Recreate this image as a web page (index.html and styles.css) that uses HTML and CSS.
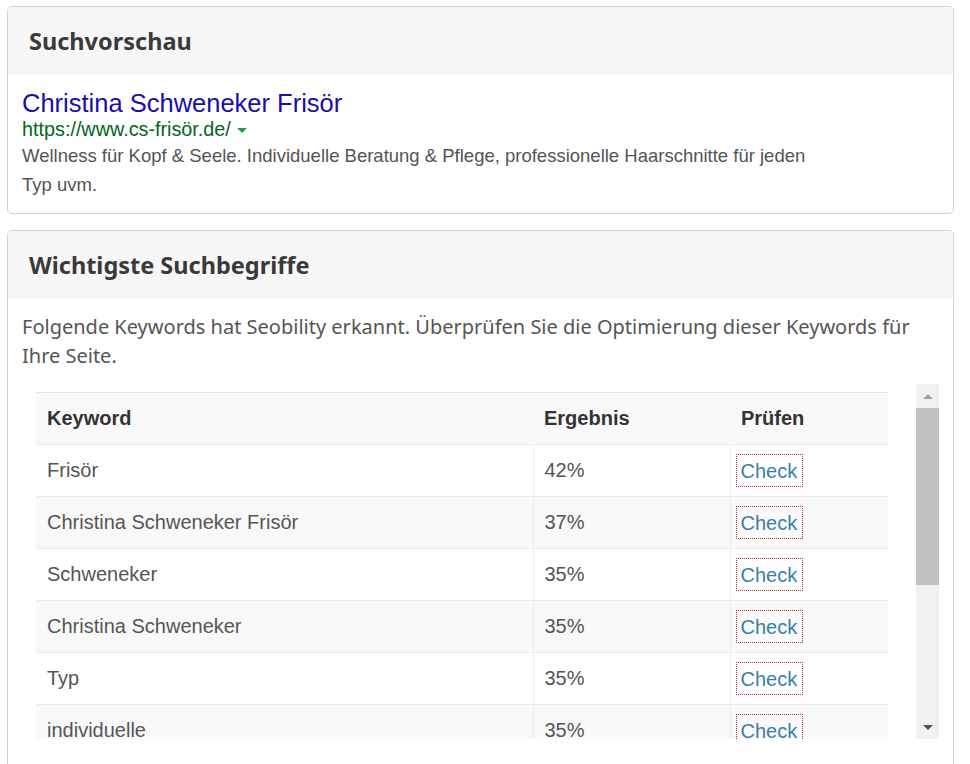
FILE: index.html
```html
<!DOCTYPE html>
<html lang="de">
<head>
<meta charset="utf-8">
<title>Suchvorschau</title>
<link rel="stylesheet" href="styles.css">
</head>
<body>
<div class="page">
  <section class="card">
    <header class="card-head">Suchvorschau</header>
    <div class="card-body snippet">
      <div class="s-title">Christina Schweneker Frisör</div>
      <div class="s-url">https://www.cs-frisör.de/<span class="caret"></span></div>
      <div class="s-desc">Wellness für Kopf &amp; Seele. Individuelle Beratung &amp; Pflege, professionelle Haarschnitte für jeden Typ uvm.</div>
    </div>
  </section>
  <section class="card card-keywords">
    <header class="card-head">Wichtigste Suchbegriffe</header>
    <div class="card-body">
      <p class="intro">Folgende Keywords hat Seobility erkannt. Überprüfen Sie die Optimierung dieser Keywords für Ihre Seite.</p>
      <div class="scrollbox">
        <div class="viewport">
          <table class="kw-table">
            <thead>
              <tr><th class="c1">Keyword</th><th class="c2">Ergebnis</th><th class="c3">Prüfen</th></tr>
            </thead>
            <tbody>
              <tr><td>Frisör</td><td>42%</td><td><a class="check" href="#">Check</a></td></tr>
              <tr><td>Christina Schweneker Frisör</td><td>37%</td><td><a class="check" href="#">Check</a></td></tr>
              <tr><td>Schweneker</td><td>35%</td><td><a class="check" href="#">Check</a></td></tr>
              <tr><td>Christina Schweneker</td><td>35%</td><td><a class="check" href="#">Check</a></td></tr>
              <tr><td>Typ</td><td>35%</td><td><a class="check" href="#">Check</a></td></tr>
              <tr><td>individuelle</td><td>35%</td><td><a class="check" href="#">Check</a></td></tr>
              <tr><td>Beratung</td><td>35%</td><td><a class="check" href="#">Check</a></td></tr>
            </tbody>
          </table>
        </div>
        <div class="scrollbar">
          <div class="sb-btn sb-up"><span class="tri-up"></span></div>
          <div class="sb-track"><div class="sb-thumb"></div></div>
          <div class="sb-btn sb-down"><span class="tri-down"></span></div>
        </div>
      </div>
    </div>
  </section>
</div>
</body>
</html>
```

FILE: styles.css
```css
html, body {
  margin: 0;
  padding: 0;
  background: #ffffff;
}

body {
  font-family: "Noto Sans", "Open Sans", sans-serif;
  color: #555555;
  overflow: hidden;
}

.page {
  padding: 6px 16px 0 7px;
  display: flex;
  flex-direction: column;
  gap: 16px;
}

.card {
  border: 1px solid #d2d2d2;
  border-radius: 5px;
  background: #ffffff;
  overflow: hidden;
}

.card-head {
  height: 68px;
  display: flex;
  align-items: center;
  padding: 0 21px;
  background: #f7f7f7;
  font-family: "Noto Sans", sans-serif;
  font-weight: 700;
  font-size: 23.5px;
  color: #3a3a3a;
}

.card-body {
  padding: 0 14px;
}

.snippet {
  padding-top: 15px;
  padding-bottom: 14px;
  font-family: "Liberation Sans", Arial, sans-serif;
}

.s-title {
  font-size: 25.5px;
  line-height: 27px;
  color: #1a0dab;
}

.s-url {
  font-size: 19.8px;
  line-height: 24px;
  color: #006621;
}

.caret {
  display: inline-block;
  width: 0;
  height: 0;
  margin-left: 6px;
  vertical-align: middle;
  border-left: 5px solid transparent;
  border-right: 5px solid transparent;
  border-top: 5px solid #2a9a4a;
}

.s-desc {
  font-size: 18.5px;
  line-height: 29px;
  color: #545454;
  max-width: 800px;
}

.intro {
  margin: 13px 0 14px;
  font-size: 20px;
  line-height: 29px;
  color: #555555;
}

.card-keywords .card-body {
  padding-bottom: 60px;
}

.scrollbox {
  display: flex;
  height: 355px;
}

.viewport {
  flex: 1;
  overflow: hidden;
  padding: 8px 28px 0 14px;
}

.kw-table {
  width: 100%;
  border-collapse: collapse;
  font-family: "Liberation Sans", Arial, sans-serif;
  font-size: 20px;
  color: #555555;
}

.kw-table th {
  text-align: left;
  font-weight: 700;
  color: #333333;
  background: #f9f9f9;
  height: 51px;
  padding: 0 11px;
  border-top: 1px solid #e6e6e6;
}

.kw-table th.c1 { width: 475px; }
.kw-table th.c2 { width: 175px; }

.kw-table td {
  height: 51px;
  padding: 0 11px;
  border-top: 1px solid #ececec;
  vertical-align: middle;
}

.kw-table td + td {
  border-left: 1px solid #eeeeee;
}

.kw-table tbody tr:nth-child(even) td {
  background: #f9f9f9;
}

.check {
  display: inline-block;
  margin-left: -6px;
  padding: 5px 6px 4px 5px;
  line-height: 24px;
  color: #3a7fa6;
  text-decoration: none;
  outline: 1px dotted #c0303a;
  outline-offset: -1px;
}

.scrollbar {
  width: 23px;
  display: flex;
  flex-direction: column;
  background: #f1f1f1;
}

.sb-btn {
  height: 24px;
  display: flex;
  align-items: center;
  justify-content: center;
}

.sb-track {
  flex: 1;
}

.sb-thumb {
  height: 177px;
  background: #c1c1c1;
}

.tri-up {
  width: 0;
  height: 0;
  border-left: 5px solid transparent;
  border-right: 5px solid transparent;
  border-bottom: 5px solid #a3a3a3;
}

.tri-down {
  width: 0;
  height: 0;
  border-left: 5px solid transparent;
  border-right: 5px solid transparent;
  border-top: 5px solid #505050;
}
```
